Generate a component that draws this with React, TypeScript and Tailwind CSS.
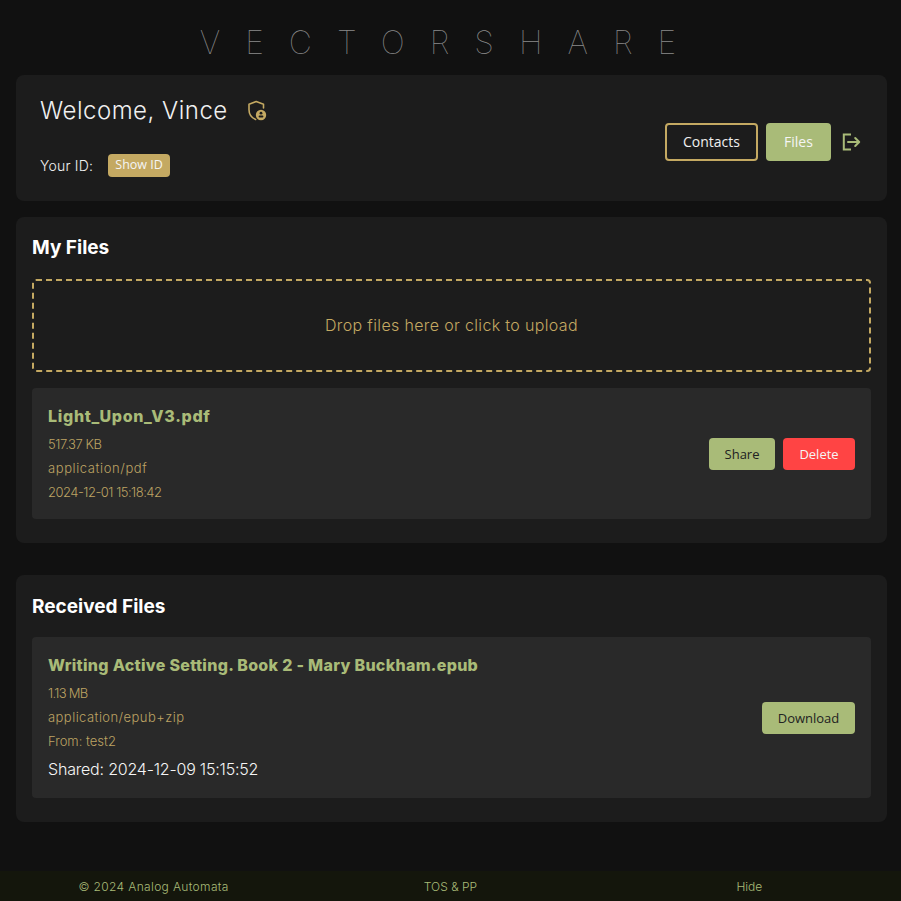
import React from "react";

const sans = "font-['Inter','Noto_Sans',sans-serif]";
const ui = "font-['Open_Sans','Noto_Sans',sans-serif]";

const FileMeta: React.FC<{ className?: string; children: React.ReactNode }> = ({ className, children }) => (
  <p className={`text-[13px] leading-6 font-light text-[#bda363] ${className ?? ""}`}>{children}</p>
);

const ShieldIcon = () => (
  <svg width="20" height="21" viewBox="0 0 20 21" fill="none" className="text-[#c4a962]">
    <path
      d="M16.5 8V4.2L9.2 1.6 2 4.2v5.6c0 4.6 2.6 8 6.6 9.6"
      stroke="currentColor"
      strokeWidth="1.6"
      strokeLinecap="round"
      strokeLinejoin="round"
    />
    <circle cx="14" cy="15" r="5.2" fill="currentColor" />
    <circle cx="14" cy="13.2" r="1.4" fill="#1c1c1c" />
    <rect x="11.6" y="15.4" width="4.8" height="2.2" rx="1" fill="#1c1c1c" />
  </svg>
);

const LogoutIcon = () => (
  <svg width="20" height="20" viewBox="0 0 20 20" fill="none" stroke="#a9bb78" strokeWidth="2">
    <path d="M9 2.5H2.8v15H9" strokeLinecap="square" />
    <path d="M7 10h11M14.2 6l4 4-4 4" strokeLinecap="round" strokeLinejoin="round" />
  </svg>
);

export default function App() {
  return (
    <div className={`min-h-[901px] bg-[#111111] flex flex-col antialiased ${sans}`}>
      <h1 className="h-[75px] pt-[21px] text-center text-[32px] leading-[44px] font-thin tracking-[25px] text-[#8a8a8a]">
        VECTORSHARE
      </h1>

      <main className="ml-4 mr-[14px] flex flex-col">
        {/* header */}
        <section className="h-[126px] rounded-lg bg-[#1c1c1c] pl-6 pr-[26px] flex items-center justify-between">
          <div className="mb-[8px]">
            <div className="flex items-center gap-[19px]">
              <span className="text-2xl leading-[36px] font-light tracking-[0.5px] text-[#f0f0f0]">Welcome, Vince</span>
              <ShieldIcon />
            </div>
            <div className="mt-[25px] mb-[-1px] flex items-center gap-[15px]">
              <span className="text-[14px] font-light tracking-[0.2px] text-[#f0f0f0]">Your ID:</span>
              <button className={`h-[23px] w-[62px] rounded bg-[#c4a962] text-[12.5px] text-[#f5f5f5] ${ui}`}>Show ID</button>
            </div>
          </div>
          <div className="flex items-center mt-[7px]">
            <button className={`h-[38px] w-[93px] rounded border-2 border-[#c4a962] text-sm text-[#f0f0f0] ${ui}`}>Contacts</button>
            <button className={`ml-2 h-[38px] w-[65px] rounded bg-[#a9bb78] text-sm text-[#f5f5f5] ${ui}`}>Files</button>
            <span className="ml-[10px]"><LogoutIcon /></span>
          </div>
        </section>

        {/* my files */}
        <section className="mt-4 h-[326px] rounded-lg bg-[#1c1c1c] p-4">
          <h2 className="text-[19px] leading-[30px] font-bold text-white">My Files</h2>
          <div className="mt-4 h-[93px] pb-[2px] rounded border-2 border-dashed border-[#c4a962] flex items-center justify-center text-base font-light tracking-[0.35px] text-[#c4a962]">
            Drop files here or click to upload
          </div>
          <div className="mt-4 h-[131px] rounded bg-[#292929] px-4 flex items-center justify-between">
            <div>
              <p className="mb-[4px] text-base leading-[24px] font-extrabold tracking-[0.7px] text-[#a9bb78]">Light_Upon_V3.pdf</p>
              <FileMeta className="tracking-[-0.45px]">517.37 KB</FileMeta>
              <FileMeta className="tracking-[0.6px]">application/pdf</FileMeta>
              <FileMeta className="tracking-[-0.5px]">2024-12-01 15:18:42</FileMeta>
            </div>
            <div className="flex gap-2">
              <button className={`h-8 w-[66px] pt-[2px] rounded bg-[#a9bb78] text-[13px] text-[#222222] ${ui}`}>Share</button>
              <button className={`h-8 w-[72px] pt-[2px] rounded bg-[#ff4444] text-[13px] text-[#f5f5f5] ${ui}`}>Delete</button>
            </div>
          </div>
        </section>

        {/* received files */}
        <section className="mt-8 h-[247px] rounded-lg bg-[#1c1c1c] p-4">
          <h2 className="text-[19px] leading-[32px] font-bold text-white">Received Files</h2>
          <div className="mt-[14px] h-[161px] rounded bg-[#292929] px-4 flex items-center justify-between">
            <div className="pb-px">
              <p className="mb-[4px] text-base leading-[24px] font-extrabold tracking-[0.3px] text-[#a9bb78]">Writing Active Setting. Book 2 - Mary Buckham.epub</p>
              <FileMeta className="tracking-[-0.7px]">1.13 MB</FileMeta>
              <FileMeta className="tracking-[0.45px]">application/epub+zip</FileMeta>
              <FileMeta>From: test2</FileMeta>
              <p className="mt-[4px] text-base leading-6 font-light tracking-[-0.2px] text-[#f5f5f5]">Shared: 2024-12-09 15:15:52</p>
            </div>
            <button className={`h-8 w-[93px] pt-[2px] rounded bg-[#a9bb78] text-[13px] text-[#222222] ${ui}`}>Download</button>
          </div>
        </section>
      </main>

      <footer className="mt-auto h-[30px] pt-px bg-[#14160c] grid grid-cols-3 items-center text-center text-xs font-light text-[#a9bb78]">
        <span className="pl-[7px] tracking-[0.35px]">© 2024 Analog Automata</span>
        <span>TOS &amp; PP</span>
        <span className="pr-[3px]">Hide</span>
      </footer>
    </div>
  );
}
